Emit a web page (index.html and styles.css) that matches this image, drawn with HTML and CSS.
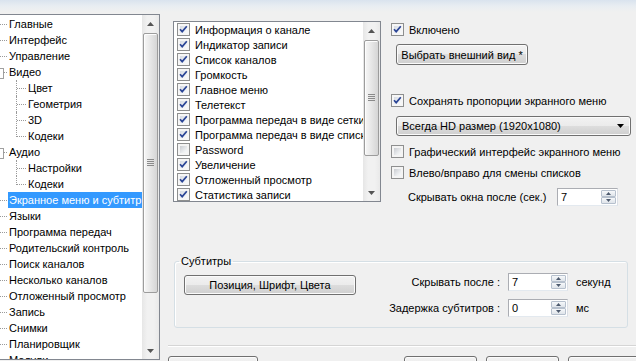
FILE: index.html
```html
<!DOCTYPE html>
<html lang="ru">
<head>
<meta charset="utf-8">
<title>Настройки</title>
<link rel="stylesheet" href="styles.css">
</head>
<body>
<div class="topband"></div>
<div class="main">
  <div class="tree">
    <div class="tree-items">
      <div class="ti"><span class="lbl">Главные</span></div>
      <div class="ti"><span class="lbl">Интерфейс</span></div>
      <div class="ti"><span class="lbl">Управление</span></div>
      <div class="ti exp"><span class="lbl">Видео</span></div>
      <div class="ti child"><span class="lbl">Цвет</span></div>
      <div class="ti child"><span class="lbl">Геометрия</span></div>
      <div class="ti child"><span class="lbl">3D</span></div>
      <div class="ti child last"><span class="lbl">Кодеки</span></div>
      <div class="ti exp"><span class="lbl">Аудио</span></div>
      <div class="ti child"><span class="lbl">Настройки</span></div>
      <div class="ti child last"><span class="lbl">Кодеки</span></div>
      <div class="ti sel"><span class="lbl">Экранное меню и субтитры</span></div>
      <div class="ti"><span class="lbl">Языки</span></div>
      <div class="ti"><span class="lbl">Программа передач</span></div>
      <div class="ti"><span class="lbl">Родительский контроль</span></div>
      <div class="ti"><span class="lbl">Поиск каналов</span></div>
      <div class="ti"><span class="lbl">Несколько каналов</span></div>
      <div class="ti"><span class="lbl">Отложенный просмотр</span></div>
      <div class="ti"><span class="lbl">Запись</span></div>
      <div class="ti"><span class="lbl">Снимки</span></div>
      <div class="ti"><span class="lbl">Планировщик</span></div>
      <div class="ti"><span class="lbl">Модули</span></div>
    </div>
    <div class="sb">
      <div class="sb-btn"><svg width="7" height="4" viewBox="0 0 7 4"><polygon points="0,4 3.5,0 7,4" fill="#555"/></svg></div>
      <div class="sb-track">
        <div class="sb-thumb tree-thumb"><svg width="7" height="8" viewBox="0 0 7 8"><g stroke="#8a8a8a"><line x1="0" y1="0.5" x2="7" y2="0.5"/><line x1="0" y1="2.5" x2="7" y2="2.5"/><line x1="0" y1="4.5" x2="7" y2="4.5"/><line x1="0" y1="6.5" x2="7" y2="6.5"/></g></svg></div>
      </div>
      <div class="sb-btn"><svg width="7" height="4" viewBox="0 0 7 4"><polygon points="0,0 3.5,4 7,0" fill="#555"/></svg></div>
    </div>
  </div>

  <div class="panel">
    <div class="top">
      <div class="checklist">
        <div class="cl-items">
          <div class="cl-item"><span class="cb on"><svg width="11" height="11" viewBox="0 0 11 11"><path d="M2 5.2 L4.2 7.6 L8.8 2.2" fill="none" stroke="#2b4596" stroke-width="1.7"/></svg></span>Информация о канале</div>
          <div class="cl-item"><span class="cb on"><svg width="11" height="11" viewBox="0 0 11 11"><path d="M2 5.2 L4.2 7.6 L8.8 2.2" fill="none" stroke="#2b4596" stroke-width="1.7"/></svg></span>Индикатор записи</div>
          <div class="cl-item"><span class="cb on"><svg width="11" height="11" viewBox="0 0 11 11"><path d="M2 5.2 L4.2 7.6 L8.8 2.2" fill="none" stroke="#2b4596" stroke-width="1.7"/></svg></span>Список каналов</div>
          <div class="cl-item"><span class="cb on"><svg width="11" height="11" viewBox="0 0 11 11"><path d="M2 5.2 L4.2 7.6 L8.8 2.2" fill="none" stroke="#2b4596" stroke-width="1.7"/></svg></span>Громкость</div>
          <div class="cl-item"><span class="cb on"><svg width="11" height="11" viewBox="0 0 11 11"><path d="M2 5.2 L4.2 7.6 L8.8 2.2" fill="none" stroke="#2b4596" stroke-width="1.7"/></svg></span>Главное меню</div>
          <div class="cl-item"><span class="cb on"><svg width="11" height="11" viewBox="0 0 11 11"><path d="M2 5.2 L4.2 7.6 L8.8 2.2" fill="none" stroke="#2b4596" stroke-width="1.7"/></svg></span>Телетекст</div>
          <div class="cl-item"><span class="cb on"><svg width="11" height="11" viewBox="0 0 11 11"><path d="M2 5.2 L4.2 7.6 L8.8 2.2" fill="none" stroke="#2b4596" stroke-width="1.7"/></svg></span>Программа передач в виде сетки</div>
          <div class="cl-item"><span class="cb on"><svg width="11" height="11" viewBox="0 0 11 11"><path d="M2 5.2 L4.2 7.6 L8.8 2.2" fill="none" stroke="#2b4596" stroke-width="1.7"/></svg></span>Программа передач в виде списка</div>
          <div class="cl-item"><span class="cb"></span>Password</div>
          <div class="cl-item"><span class="cb on"><svg width="11" height="11" viewBox="0 0 11 11"><path d="M2 5.2 L4.2 7.6 L8.8 2.2" fill="none" stroke="#2b4596" stroke-width="1.7"/></svg></span>Увеличение</div>
          <div class="cl-item"><span class="cb on"><svg width="11" height="11" viewBox="0 0 11 11"><path d="M2 5.2 L4.2 7.6 L8.8 2.2" fill="none" stroke="#2b4596" stroke-width="1.7"/></svg></span>Отложенный просмотр</div>
          <div class="cl-item"><span class="cb on"><svg width="11" height="11" viewBox="0 0 11 11"><path d="M2 5.2 L4.2 7.6 L8.8 2.2" fill="none" stroke="#2b4596" stroke-width="1.7"/></svg></span>Статистика записи</div>
        </div>
        <div class="sb">
          <div class="sb-btn"><svg width="7" height="4" viewBox="0 0 7 4"><polygon points="0,4 3.5,0 7,4" fill="#555"/></svg></div>
          <div class="sb-track">
            <div class="sb-thumb list-thumb"><svg width="7" height="8" viewBox="0 0 7 8"><g stroke="#8a8a8a"><line x1="0" y1="0.5" x2="7" y2="0.5"/><line x1="0" y1="2.5" x2="7" y2="2.5"/><line x1="0" y1="4.5" x2="7" y2="4.5"/><line x1="0" y1="6.5" x2="7" y2="6.5"/></g></svg></div>
          </div>
          <div class="sb-btn"><svg width="7" height="4" viewBox="0 0 7 4"><polygon points="0,0 3.5,4 7,0" fill="#555"/></svg></div>
        </div>
      </div>

      <div class="opts">
        <div class="chk-row"><span class="cb on"><svg width="11" height="11" viewBox="0 0 11 11"><path d="M2 5.2 L4.2 7.6 L8.8 2.2" fill="none" stroke="#2b4596" stroke-width="1.7"/></svg></span>Включено</div>
        <div class="btn pick">Выбрать внешний вид *</div>
        <div class="chk-row keep"><span class="cb on"><svg width="11" height="11" viewBox="0 0 11 11"><path d="M2 5.2 L4.2 7.6 L8.8 2.2" fill="none" stroke="#2b4596" stroke-width="1.7"/></svg></span>Сохранять пропорции экранного меню</div>
        <div class="btn combo"><span>Всегда HD размер (1920x1080)</span><svg width="7" height="4" viewBox="0 0 7 4"><polygon points="0,0 3.5,4 7,0" fill="#000"/></svg></div>
        <div class="chk-row gfx"><span class="cb"></span>Графический интерфейс экранного меню</div>
        <div class="chk-row lr"><span class="cb"></span>Влево/вправо для смены списков</div>
        <div class="hide-row">
          <span class="hide-label">Скрывать окна после (сек.)</span>
          <div class="spin w61"><span class="val">7</span><span class="arrows"><span class="arr"><svg width="5" height="3" viewBox="0 0 5 3"><polygon points="0,3 2.5,0 5,3" fill="#4d5a6e"/></svg></span><span class="arr"><svg width="5" height="3" viewBox="0 0 5 3"><polygon points="0,0 2.5,3 5,0" fill="#4d5a6e"/></svg></span></span></div>
        </div>
      </div>
    </div>

    <fieldset class="group">
      <legend>Субтитры</legend>
      <div class="group-grid">
        <div class="btn pos">Позиция, Шрифт, Цвета</div>
        <span class="glabel">Скрывать после :</span>
        <div class="spin"><span class="val">7</span><span class="arrows"><span class="arr"><svg width="5" height="3" viewBox="0 0 5 3"><polygon points="0,3 2.5,0 5,3" fill="#4d5a6e"/></svg></span><span class="arr"><svg width="5" height="3" viewBox="0 0 5 3"><polygon points="0,0 2.5,3 5,0" fill="#4d5a6e"/></svg></span></span></div>
        <span class="unit">секунд</span>
        <span></span>
        <span class="glabel">Задержка субтитров :</span>
        <div class="spin"><span class="val">0</span><span class="arrows"><span class="arr"><svg width="5" height="3" viewBox="0 0 5 3"><polygon points="0,3 2.5,0 5,3" fill="#4d5a6e"/></svg></span><span class="arr"><svg width="5" height="3" viewBox="0 0 5 3"><polygon points="0,0 2.5,3 5,0" fill="#4d5a6e"/></svg></span></span></div>
        <span class="unit">мс</span>
      </div>
    </fieldset>

    <div class="sep"></div>

    <div class="bottom-buttons">
      <div class="btn bb wide"></div>
      <div class="bb-space"></div>
      <div class="btn bb"></div>
      <div class="btn bb"></div>
      <div class="btn bb"></div>
    </div>
  </div>
</div>
</body>
</html>
```

FILE: styles.css
```css
* { box-sizing: border-box; }
html, body { margin: 0; padding: 0; }
body {
  width: 636px;
  height: 361px;
  overflow: hidden;
  background: #f0f0f0;
  font-family: "Liberation Sans", Arial, sans-serif;
  font-size: 11px;
  color: #000;
}

.topband {
  height: 14px;
  background: linear-gradient(#d9e3ee, #e8edf2 6px, #f0f0f0 12px);
}

.main { display: flex; height: 347px; overflow: hidden; }

/* ---------- tree ---------- */
.tree {
  width: 160px;
  flex: none;
  height: 346px;
  display: flex;
  background: #fff;
  border-top: 1px solid #828790;
  border-right: 1px solid #828790;
  border-bottom: 1px solid #828790;
}
.tree-items {
  width: 142px;
  flex: none;
  overflow: hidden;
  padding-top: 1px;
}
.ti {
  position: relative;
  height: 16px;
  line-height: 16px;
  padding-left: 9px;
  white-space: nowrap;
}
.ti::after {
  content: "";
  position: absolute;
  left: 0;
  top: 8px;
  width: 7px;
  border-top: 1px dotted #9a9a9a;
}
.ti.exp::before {
  content: "";
  position: absolute;
  left: -7px;
  top: 4px;
  width: 9px;
  height: 9px;
  border: 1px solid #a0a0a0;
  background: #fff;
}
.ti.exp::after { left: 3px; width: 4px; }
.ti.child { padding-left: 28px; }
.ti.child::before {
  content: "";
  position: absolute;
  left: 16px;
  top: 0;
  height: 16px;
  border-left: 1px dotted #9a9a9a;
}
.ti.child.last::before { height: 9px; }
.ti.child::after { left: 17px; width: 9px; }
.ti.sel { padding-left: 8px; }
.ti.sel .lbl {
  display: inline-block;
  background: #3399ff;
  color: #fff;
  padding: 0 4px 0 1px;
}

/* ---------- scrollbars ---------- */
.sb {
  width: 17px;
  flex: none;
  display: flex;
  flex-direction: column;
  background: linear-gradient(to right, #e6e6e6, #f1f1f1 30%, #f1f1f1 70%, #e9e9e9);
}
.sb-btn {
  height: 17px;
  flex: none;
  display: flex;
  align-items: center;
  justify-content: center;
}
.sb-track { flex: 1; }
.sb-thumb {
  margin: 1px 1px 0;
  border: 1px solid #9c9c9c;
  border-radius: 2px;
  background: linear-gradient(to right, #f7f7f7, #e8e8e8 45%, #d5d5d5);
  box-shadow: inset 1px 1px #fdfdfd;
  display: flex;
  align-items: center;
  justify-content: center;
}
.tree-thumb { height: 260px; }
.list-thumb { height: 116px; }

/* ---------- checkbox ---------- */
.cb {
  display: inline-flex;
  flex: none;
  width: 13px;
  height: 13px;
  border: 1px solid #8e8f8f;
  padding: 2px;
  background: linear-gradient(135deg, #c9ccd1, #eef0f2 70%, #f8f8f8) content-box, #f4f4f4;
}
.cb.on {
  background: linear-gradient(135deg, #d6dbe3, #f0f2f5 70%, #fafafa) content-box, #f6f6f6;
}
.cb svg { margin: -2px; flex: none; }

/* ---------- panel ---------- */
.panel { flex: 1; display: flex; flex-direction: column; }
.panel > * { flex: none; }
.top { display: flex; height: 192px; }

.checklist {
  width: 208px;
  height: 181px;
  margin: 7px 0 0 13px;
  border: 1px solid #828790;
  background: #fff;
  display: flex;
}
.cl-items {
  flex: 1;
  overflow: hidden;
  padding-left: 3px;
}
.cl-item {
  height: 15px;
  display: flex;
  align-items: center;
  gap: 5px;
  white-space: nowrap;
}

.opts {
  margin-left: 10px;
  width: 240px;
  display: flex;
  flex-direction: column;
  align-items: flex-start;
  padding-top: 8px;
}
.chk-row {
  height: 15px;
  display: flex;
  align-items: center;
  gap: 5px;
  white-space: nowrap;
}
.btn {
  height: 21px;
  border: 1px solid #707070;
  border-radius: 3px;
  background: linear-gradient(#f2f2f2, #ebebeb 50%, #dddddd 50%, #cfcfcf);
  box-shadow: inset 0 0 0 1px #fbfbfb;
  display: flex;
  align-items: center;
  justify-content: center;
  white-space: nowrap;
}
.pick { margin: 7px 0 0 5px; width: 132px; }
.keep { margin-top: 28px; }
.combo {
  margin: 8px 0 0 5px;
  width: 235px;
  height: 20px;
  justify-content: space-between;
  padding: 0 6px 0 5px;
}
.gfx { margin-top: 8px; }
.lr { margin-top: 6px; }
.hide-row {
  margin: 8px 0 0 17px;
  display: flex;
  align-items: center;
}
.hide-label { width: 149px; flex: none; white-space: nowrap; }

.spin {
  display: flex;
  height: 18px;
  border: 1px solid #abadb3;
  border-right-color: #dbdfe6;
  border-bottom-color: #e3e9ef;
  background: #fff;
}
.spin.w61 { width: 61px; }
.spin .val { flex: 1; padding-left: 3px; line-height: 16px; }
.spin .arrows {
  width: 16px;
  flex: none;
  display: flex;
  flex-direction: column;
  padding: 1px 1px 1px 0;
}
.spin .arr {
  flex: 1;
  border: 1px solid #b6c0cd;
  border-radius: 1px;
  background: linear-gradient(#f6f8fa, #dfe4ea);
  display: flex;
  align-items: center;
  justify-content: center;
}

/* ---------- group ---------- */
.group {
  margin: 49px 0 0 14px;
  width: 454px;
  height: 73px;
  border: 1px solid #d5dfe5;
  border-radius: 3px;
  padding: 5px 0 0 9px;
  box-shadow: inset 1px 1px #fff;
  min-width: 0;
}
.group legend {
  padding: 0 2px;
  margin-left: -5px;
  line-height: 13px;
}
.group-grid {
  display: grid;
  grid-template-columns: 172px 136px 60px auto;
  grid-auto-rows: 18px;
  column-gap: 8px;
  row-gap: 8px;
  align-items: center;
}
.pos { height: 20px; align-self: start; margin-top: 2px; }
.glabel { text-align: right; white-space: nowrap; }
.unit { white-space: nowrap; }

.sep {
  margin: 17px 0 0 8px;
  height: 2px;
  border-top: 1px solid #d5d5d5;
  border-bottom: 1px solid #ffffff;
}

.bottom-buttons {
  display: flex;
  margin-top: 9px;
  padding-left: 8px;
  gap: 9px;
}
.bb { height: 23px; width: 73px; flex: none; }
.bb.wide { width: 90px; }
.bb-space { width: 128px; flex: none; }
```
